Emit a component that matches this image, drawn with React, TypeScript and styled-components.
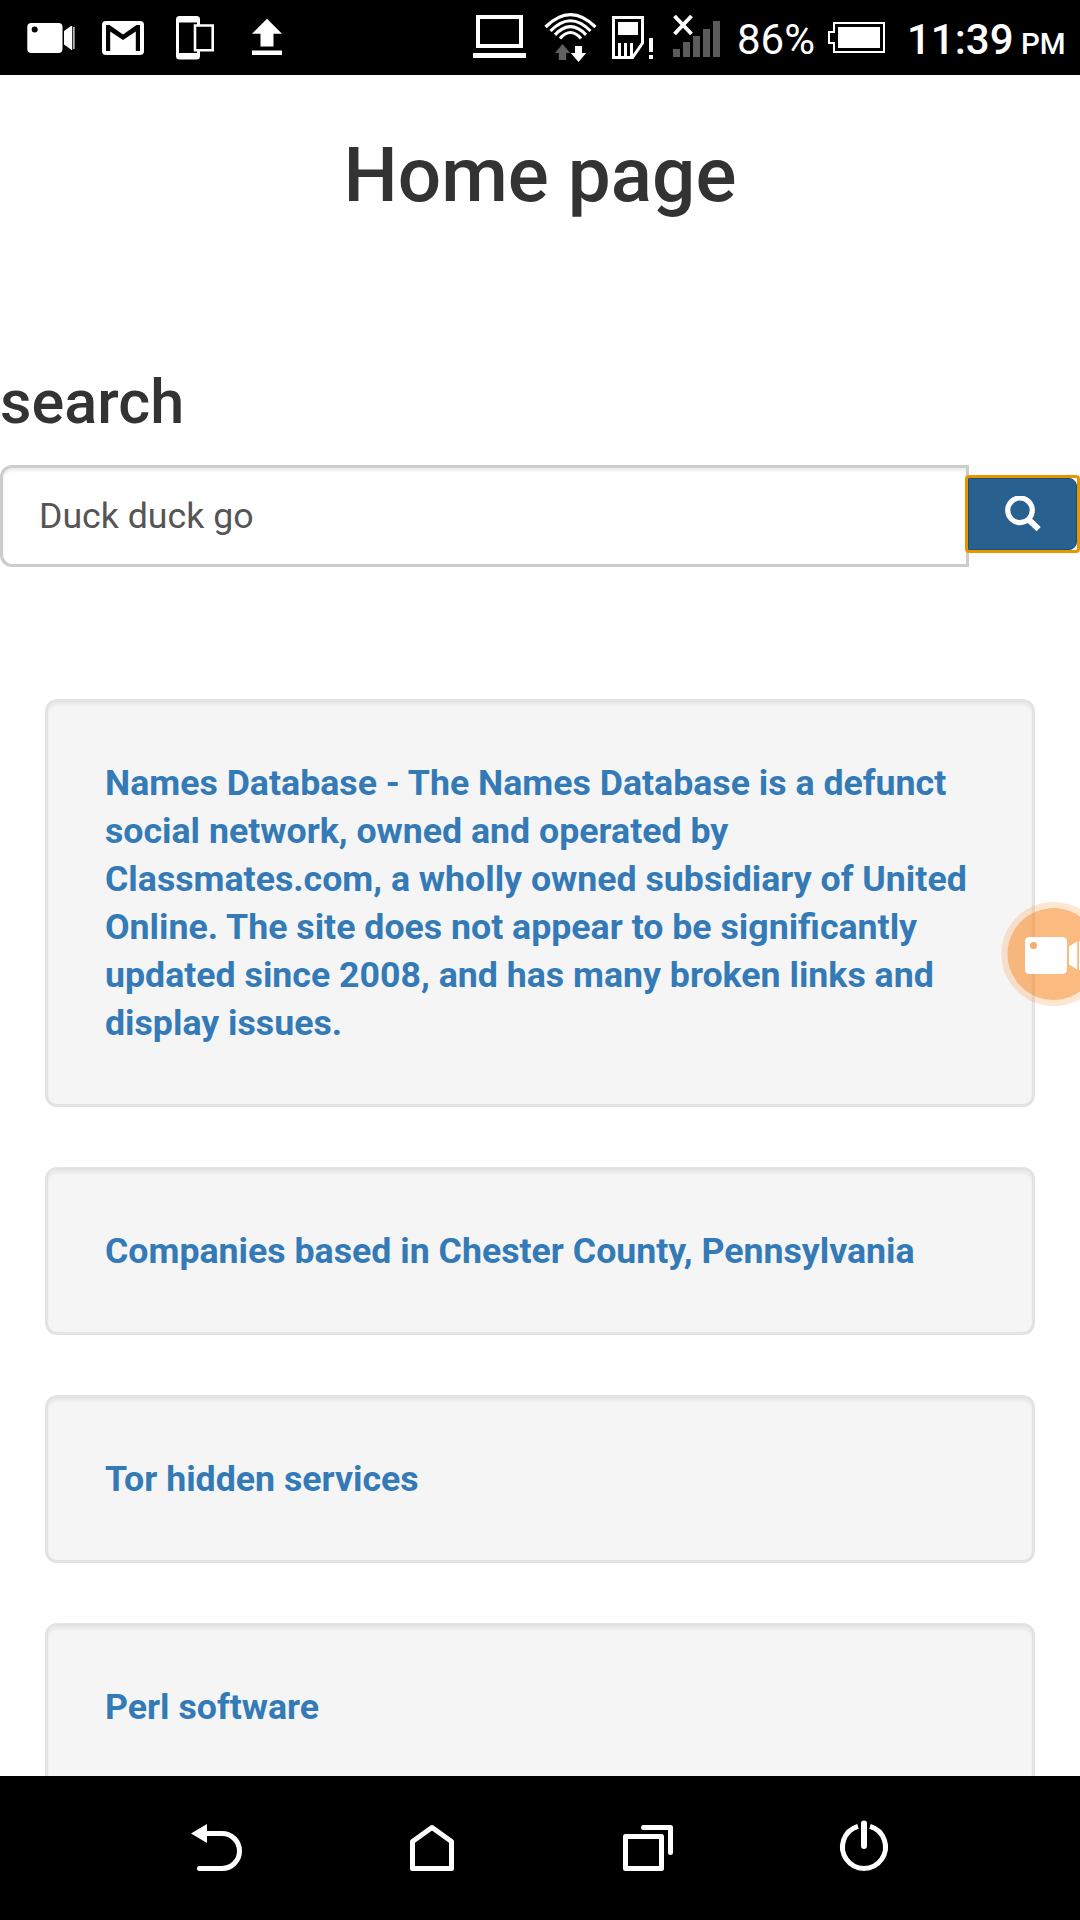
import React from "react";
import styled, { createGlobalStyle } from "styled-components";

const GlobalStyle = createGlobalStyle`
  * { box-sizing: border-box; }
  html, body { margin: 0; padding: 0; background: #fff; }
  body { font-family: Roboto, "Liberation Sans", sans-serif; overflow: hidden; }
`;

const Screen = styled.div`
  position: relative;
  display: flex;
  flex-direction: column;
  width: 1080px;
  height: 1920px;
  overflow: hidden;
  background: #fff;
`;

const StatusBar = styled.header`
  flex: none;
  display: flex;
  justify-content: space-between;
  height: 75px;
  padding: 0 16px 0 27px;
  background: #000;
  color: #fff;
`;

const StatusGroup = styled.div`
  display: flex;
  align-items: flex-start;
`;

const Glyph = styled.svg<{ $before?: number }>`
  flex: none;
  display: block;
  margin-left: ${(p) => p.$before ?? 0}px;
`;

const StatusText = styled.span<{ $size: number; $weight: number; $before: number; $width: number }>`
  flex: none;
  width: ${(p) => p.$width}px;
  margin-left: ${(p) => p.$before}px;
  padding-top: 15px;
  font-size: ${(p) => p.$size}px;
  font-weight: ${(p) => p.$weight};
  line-height: 50px;
  white-space: nowrap;
`;

const Meridiem = styled(StatusText)`
  padding-top: 19px;
`;

const Page = styled.main`
  flex: 1;
  min-height: 0;
  overflow: hidden;
  background: #fff;
`;

const Title = styled.h2`
  margin: 58px 0 0;
  color: #333;
  font-size: 76.5px;
  font-weight: 500;
  line-height: 84px;
  text-align: center;
`;

const SearchTitle = styled.h3`
  margin: 152px 0 30px;
  color: #333;
  font-size: 61.2px;
  font-weight: 500;
  line-height: 66px;
`;

const SearchRow = styled.form`
  display: flex;
  align-items: center;
  height: 102px;
`;

const SearchInput = styled.input`
  flex: none;
  width: 969px;
  height: 102px;
  padding: 0 36px;
  border: 3px solid #ccc;
  border-radius: 12px 0 0 12px;
  outline: none;
  background: #fff;
  box-shadow: inset 0 3px 3px rgba(0, 0, 0, 0.075);
  color: #555;
  font: 400 35.7px/48px Roboto, "Liberation Sans", sans-serif;
`;

const FocusFrame = styled.div`
  flex: none;
  z-index: 1;
  width: 115px;
  height: 78px;
  margin: -4px 0 0 -4px;
  border: 3px solid #e59700;
  border-radius: 4px;
  background: #fff;
`;

const SearchButton = styled.button`
  display: flex;
  align-items: center;
  justify-content: center;
  width: 100%;
  height: 100%;
  padding: 0;
  border: 1px solid #204d74;
  border-radius: 0 8px 8px 0;
  background: #286090;
`;

const Results = styled.section`
  display: flex;
  flex-direction: column;
  gap: 60px;
  padding: 132px 45px 0;
`;

const Well = styled.article`
  padding: 57px;
  border: 3px solid #e3e3e3;
  border-radius: 12px;
  background: #f5f5f5;
  box-shadow: inset 0 3px 3px rgba(0, 0, 0, 0.05);
`;

const ResultLink = styled.a`
  display: block;
  color: #337ab7;
  font-size: 35.7px;
  font-weight: 700;
  line-height: 48px;
  text-decoration: none;
`;

const Line = styled.span`
  display: block;
  white-space: nowrap;
`;

const RecorderBubble = styled.div`
  position: absolute;
  top: 902px;
  left: 1001px;
  width: 79px;
  height: 104px;
  overflow: hidden;
`;

const NavBar = styled.nav`
  flex: none;
  display: grid;
  grid-template-columns: repeat(4, 216px);
  place-content: center;
  place-items: center;
  height: 144px;
  background: #000;
`;

const results: string[][] = [
  [
    "Names Database - The Names Database is a defunct",
    "social network, owned and operated by",
    "Classmates.com, a wholly owned subsidiary of United",
    "Online. The site does not appear to be significantly",
    "updated since 2008, and has many broken links and",
    "display issues.",
  ],
  ["Companies based in Chester County, Pennsylvania"],
  ["Tor hidden services"],
  ["Perl software"],
];

const CameraIcon = () => (
  <Glyph width="48" height="75" viewBox="27 0 48 75" fill="#fff">
    <rect x="27.3" y="23" width="35.2" height="30" rx="4" />
    <circle cx="34.7" cy="29.6" r="3" fill="#000" />
    <path d="M64 31l7-5v23.5l-7-5zM71 26h1.2v24H71zM73.3 27h1.2v22h-1.2z" />
  </Glyph>
);

const MailIcon = () => (
  <Glyph $before={27} width="42" height="75" viewBox="102 0 42 75">
    <rect x="102" y="21" width="42" height="34" rx="4" fill="#fff" />
    <path d="M106 51V25h3.5l13.5 9.5L136.500 25h3.500v26h-4.200V31.500L123 40l-12.800-8.500V51z" fill="#000" />
  </Glyph>
);

const DevicesIcon = () => (
  <Glyph $before={32} width="38" height="75" viewBox="176 0 38 75">
    <rect x="176" y="16" width="24" height="43.500" rx="3.500" fill="#fff" />
    <path d="M179 22.500h18v30.500h-18z" fill="#000" />
    <path d="M195 25.500h17.700v24.800H195z" fill="#000" stroke="#fff" strokeWidth="2.600" />
  </Glyph>
);

const UploadIcon = () => (
  <Glyph $before={38} width="30" height="75" viewBox="252 0 30 75" fill="#fff">
    <path d="M267 18.800l15 15h-8.500v12.700h-13V33.800H252zM252 50.500h30V55h-30z" />
  </Glyph>
);

const LaptopIcon = () => (
  <Glyph width="53" height="75" viewBox="473 0 53 75">
    <path d="M478 17h43v29h-43z" fill="none" stroke="#fff" strokeWidth="4" />
    <path d="M473 53h53v5h-53z" fill="#fff" />
  </Glyph>
);

const WifiIcon = () => (
  <Glyph $before={18} width="53" height="75" viewBox="544 0 53 75">
    <g fill="none" stroke="#fff" strokeWidth="3.200">
      <path d="M545.500 27Q570.500 2 595.500 27" />
      <path d="M550.500 31Q570.500 10.500 590.500 31" />
      <path d="M555 34.800Q570.500 18.500 586 34.800" />
      <path d="M560 38.500Q570.500 26.500 581 38.500" />
    </g>
    <path d="M562.500 44l7.700 9h-4v7h-7.400v-7H555z" fill="#606060" />
    <path d="M578.500 62l7.700-9H582v-7h-7v7h-4.200z" fill="#fff" />
  </Glyph>
);

const SimIcon = () => (
  <Glyph $before={15} width="42" height="75" viewBox="612 0 42 75" fill="#fff">
    <path d="M613.500 17.500h29V43l-10 14.500h-19z" fill="none" stroke="#fff" strokeWidth="3" />
    <path d="M618 22h20v13h-20zM618 43h3v14h-3zM624 43h3v14h-3zM630 43h3v14h-3zM649 38h4v14h-4zM649 55h4v4h-4z" />
  </Glyph>
);

const SignalIcon = () => (
  <Glyph $before={19} width="47" height="75" viewBox="673 0 47 75">
    <path d="M673 49h7v8h-7zM683 42h7v15h-7zM693 36h7v21h-7zM703 29h7v28h-7zM713 21h7v36h-7z" fill="#5b5b5b" />
    <path d="M674.500 16l17 18M691.500 16l-17 18" stroke="#fff" strokeWidth="3.900" />
  </Glyph>
);

const BatteryIcon = () => (
  <Glyph $before={14} width="57" height="75" viewBox="828 0 57 75">
    <path d="M834 23h50v29h-50v-9h-5V32h5z" fill="none" stroke="#fff" strokeWidth="2" />
    <path d="M838 27h42v21h-42z" fill="#fff" />
  </Glyph>
);

const SearchIcon = () => (
  <Glyph width="36" height="36" viewBox="0 0 36 36" fill="none" stroke="#fff">
    <circle cx="15" cy="14.300" r="12.300" strokeWidth="5.200" />
    <path d="M23.500 23.500l10.200 9.700" strokeWidth="6" />
  </Glyph>
);

const NavIcon = ({ origin, children }: { origin: number; children: React.ReactNode }) => (
  <svg
    width="72"
    height="72"
    viewBox={`${origin} 1812 72 72`}
    fill="none"
    stroke="#fff"
    strokeWidth="5"
    strokeLinecap="round"
    strokeLinejoin="round"
  >
    {children}
  </svg>
);

export default function App() {
  return (
    <>
      <GlobalStyle />
      <Screen>
        <StatusBar>
          <StatusGroup>
            <CameraIcon />
            <MailIcon />
            <DevicesIcon />
            <UploadIcon />
          </StatusGroup>
          <StatusGroup>
            <LaptopIcon />
            <WifiIcon />
            <SimIcon />
            <SignalIcon />
            <StatusText $size={42} $weight={400} $before={17} $width={77}>86%</StatusText>
            <BatteryIcon />
            <StatusText $size={42} $weight={500} $before={22} $width={107}>11:39</StatusText>
            <Meridiem $size={29.5} $weight={500} $before={7} $width={43}>PM</Meridiem>
          </StatusGroup>
        </StatusBar>

        <Page>
          <Title>Home page</Title>
          <SearchTitle>search</SearchTitle>
          <SearchRow onSubmit={(e) => e.preventDefault()}>
            <SearchInput defaultValue="Duck duck go" aria-label="search" />
            <FocusFrame>
              <SearchButton type="submit" aria-label="search">
                <SearchIcon />
              </SearchButton>
            </FocusFrame>
          </SearchRow>
          <Results>
            {results.map((lines) => (
              <Well key={lines[0]}>
                <ResultLink href="#">
                  {lines.map((line) => (
                    <Line key={line}>{line}</Line>
                  ))}
                </ResultLink>
              </Well>
            ))}
          </Results>
        </Page>

        <NavBar>
          <NavIcon origin={180}>
            <path d="M204 1833.500h18a17.500 17.500 0 0 1 0 35h-22.500" />
            <path d="M191 1833.500l16-9.500v19z" fill="#fff" stroke="none" />
          </NavIcon>
          <NavIcon origin={396}>
            <path d="M412.500 1841.500v27h39v-27l-19.500-14z" />
          </NavIcon>
          <NavIcon origin={612}>
            <path d="M625.500 1836.500h36v32h-36zM643.500 1827.500h27v25" />
          </NavIcon>
          <NavIcon origin={828}>
            <path d="M858 1826.300a21.500 21.500 0 1 0 12 0" strokeLinecap="butt" />
            <path d="M864 1823.500v22.500" strokeWidth="6" />
          </NavIcon>
        </NavBar>

        <RecorderBubble>
          <svg width="79" height="104" viewBox="1001 902 79 104">
            <circle cx="1053.500" cy="954" r="49" fill="none" stroke="rgba(248,130,24,.2)" strokeWidth="6" />
            <circle cx="1053.500" cy="954" r="46" fill="rgba(248,130,24,.55)" />
            <rect x="1025" y="937" width="42" height="37" rx="4.500" fill="#fff" />
            <circle cx="1033.500" cy="945.500" r="3.600" fill="#f4ae6f" />
            <path d="M1069 946.500l8.200-5v28l-8.200-5zM1079 941h1v29h-1z" fill="#fff" />
          </svg>
        </RecorderBubble>
      </Screen>
    </>
  );
}
